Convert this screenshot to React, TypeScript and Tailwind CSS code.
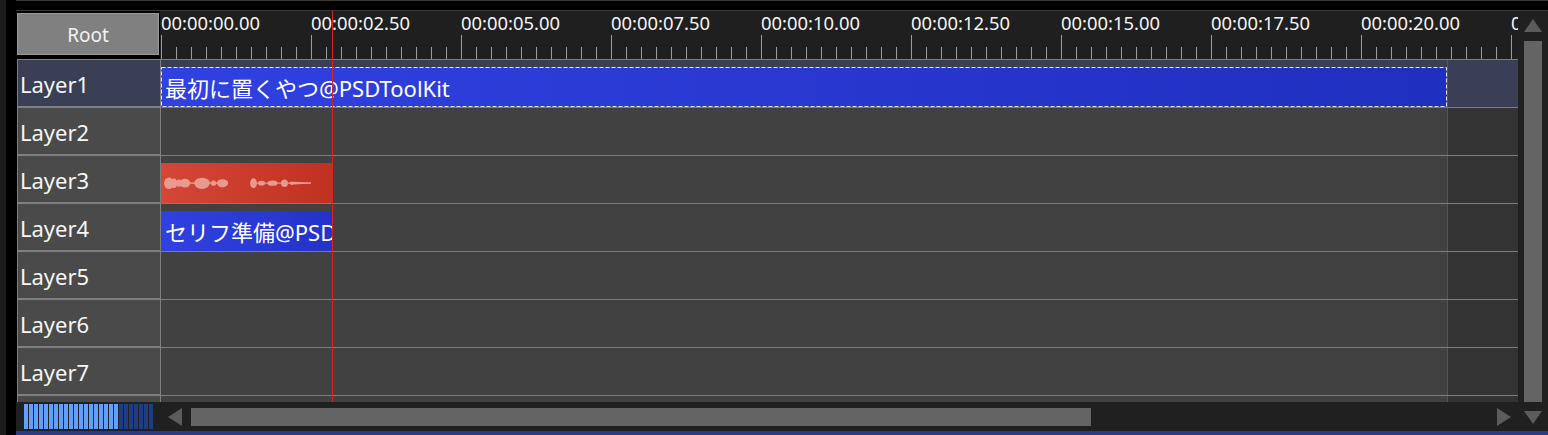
import React from "react";

const labels = [
  "00:00:00.00",
  "00:00:02.50",
  "00:00:05.00",
  "00:00:07.50",
  "00:00:10.00",
  "00:00:12.50",
  "00:00:15.00",
  "00:00:17.50",
  "00:00:20.00",
  "00:00:22.50",
];

type Clip =
  | { kind: "blue"; w: number; text: string; dashed?: boolean }
  | { kind: "audio"; w: number };

const rows: { name: string; selected?: boolean; clip?: Clip }[] = [
  { name: "Layer1", selected: true, clip: { kind: "blue", w: 1286, text: "最初に置くやつ@PSDToolKit", dashed: true } },
  { name: "Layer2" },
  { name: "Layer3", clip: { kind: "audio", w: 171 } },
  { name: "Layer4", clip: { kind: "blue", w: 171, text: "セリフ準備@PSD" } },
  { name: "Layer5" },
  { name: "Layer6" },
  { name: "Layer7" },
  { name: "Layer8" },
];

function Ruler() {
  const ticks = [];
  for (let i = 0; i * 15 + 1 < 1358; i++) {
    const x = 1.5 + i * 15;
    const major = i % 10 === 0;
    ticks.push(<line key={i} x1={x} x2={x} y1={major ? 24 : 36} y2={48} stroke="#9c9c9c" strokeWidth={1} />);
  }
  return (
    <div className="relative w-[1358px] h-[48px] bg-[#1f1f1f] overflow-hidden">
      <svg className="absolute inset-0" width={1358} height={48}>
        {ticks}
      </svg>
      <div className="relative flex pt-[3px] pl-px text-[18.4px] leading-[18px] text-[#f4f4f4] whitespace-nowrap">
        {labels.map((l) => (
          <span key={l} className="w-[150px] shrink-0">
            {l}
          </span>
        ))}
      </div>
    </div>
  );
}

function Waveform() {
  const f = "#e89a90";
  return (
    <svg className="absolute inset-0" width={171} height={40}>
      <rect x={4} y={19.4} width={60} height={1.4} fill={f} />
      <rect x={90} y={19.5} width={60} height={1.2} fill={f} />
      <ellipse cx={8} cy={20.3} rx={5} ry={5.8} fill={f} />
      <ellipse cx={13} cy={20.3} rx={3.4} ry={4.8} fill={f} />
      <ellipse cx={18} cy={20.2} rx={3} ry={3.6} fill={f} />
      <ellipse cx={24} cy={20.2} rx={5.2} ry={4.4} fill={f} />
      <ellipse cx={41} cy={20.3} rx={7.8} ry={5.6} fill={f} />
      <ellipse cx={52.5} cy={20.2} rx={2.6} ry={2.6} fill={f} />
      <ellipse cx={61.5} cy={20.2} rx={5.6} ry={4} fill={f} />
      <ellipse cx={92.5} cy={20.2} rx={3.4} ry={5} fill={f} />
      <ellipse cx={100.5} cy={20.2} rx={3.5} ry={2.4} fill={f} />
      <ellipse cx={111.5} cy={20.2} rx={5} ry={2.6} fill={f} />
      <ellipse cx={123.5} cy={20.2} rx={3.4} ry={3.7} fill={f} />
      <ellipse cx={131} cy={20.2} rx={2.2} ry={1.7} fill={f} />
      <polygon points="133,18.8 150,19.8 150,20.6 133,21.6" fill={f} />
    </svg>
  );
}

function ClipView({ clip }: { clip: Clip }) {
  if (clip.kind === "audio") {
    return (
      <div
        className="relative mt-[7px] h-[40px] bg-linear-to-r from-[#d44636] to-[#bf3222] shrink-0"
        style={{ width: clip.w }}
      >
        <Waveform />
      </div>
    );
  }
  return (
    <div
      className={`relative mt-[7px] h-[40px] shrink-0 overflow-hidden whitespace-nowrap text-[22px] leading-[42px] text-white ${
        clip.dashed ? "pl-[4px] bg-linear-to-r from-[#3141e1] to-[#1f2fbf]" : "pl-[4px] bg-linear-to-r from-[#3141e1] to-[#2333c8]"
      }`}
      style={{ width: clip.w }}
    >
      {clip.dashed && (
        <svg className="absolute inset-0" width={clip.w} height={40}>
          <rect
            x={0.5}
            y={0.5}
            width={clip.w - 1}
            height={39}
            fill="none"
            stroke="#e6e6e6"
            strokeWidth={1}
            strokeDasharray="4 2"
          />
        </svg>
      )}
      <span className="relative">{clip.text}</span>
    </div>
  );
}

function Row({ name, selected, clip }: { name: string; selected?: boolean; clip?: Clip }) {
  return (
    <div className="flex h-[48px] shrink-0">
      <div className="w-[145px] pl-px shrink-0">
        <div
          className={`w-[144px] h-[48px] border border-[#7f7f7f] flex items-center pt-[3px] pl-[2px] text-[22px] text-[#f6f6f6] ${
            selected ? "bg-[#3b3f56]" : "bg-[#4a4a4a]"
          }`}
        >
          {name}
        </div>
      </div>
      <div className="flex-1 flex border-t border-[#7d7d7d]">
        <div className={`w-[1286px] shrink-0 flex ${selected ? "bg-[#3a3f56]" : "bg-[#414141]"}`}>
          {clip && <ClipView clip={clip} />}
        </div>
        <div className={`flex-1 border-l border-[#555555] ${selected ? "bg-[#3a3f56]" : "bg-[#333333]"}`} />
      </div>
    </div>
  );
}

function Meter() {
  const bars = [];
  for (let i = 0; i < 26; i++) {
    bars.push(
      <div key={i} className={`w-[4px] h-[25px] ${i < 19 ? "bg-[#62a0ff]" : "bg-[#1f3d84]"}`} />
    );
  }
  return <div className="flex gap-px ml-[8px]">{bars}</div>;
}

export default function App() {
  return (
    <div className="relative w-[1548px] h-[435px] bg-black flex overflow-hidden font-['Noto_Sans','Noto_Sans_CJK_JP',sans-serif]">
      <div className="w-[6px] h-full bg-[#1c1c1c] shrink-0" />
      <div className="w-[10px] h-full bg-black shrink-0" />
      <div className="flex-1 flex flex-col">
        <div className="h-px bg-[#3a3a3a]" />
        <div className="h-[9px]" />
        <div className="h-px bg-[#3a3a3a]" />
        <div className="flex h-[420px]">
          <div className="w-[1502px] flex flex-col">
            <div className="flex h-[48px]">
              <div className="w-[144px] bg-black">
                <div className="ml-px mt-[2px] w-[142px] h-[42px] border border-[#9a9a9a] bg-[#808080] flex items-center justify-center pt-[3px] text-[19px] text-[#f2f2f2]">
                  Root
                </div>
              </div>
              <Ruler />
            </div>
            <div className="h-[343px] flex flex-col overflow-hidden">
              {rows.map((r) => (
                <Row key={r.name} {...r} />
              ))}
            </div>
            <div className="h-[29px] bg-[#202020] flex items-center">
              <Meter />
              <svg className="ml-[15px]" width={14} height={18}>
                <polygon points="14,0 14,18 0,9" fill="#5c5c5c" />
              </svg>
              <div className="ml-[9px] w-[900px] h-[18px] bg-[#646464]" />
              <svg className="ml-auto mr-[7px]" width={14} height={18}>
                <polygon points="0,0 0,18 14,9" fill="#5c5c5c" />
              </svg>
            </div>
          </div>
          <div className="w-[30px] bg-[#202020] flex flex-col items-center pt-[8px]">
            <svg width={18} height={13}>
              <polygon points="9,0 18,13 0,13" fill="#5c5c5c" />
            </svg>
            <div className="mt-[9px] w-[18px] h-[361px] bg-[#646464]" />
            <svg className="mt-[9px]" width={18} height={13}>
              <polygon points="0,0 18,0 9,13" fill="#5c5c5c" />
            </svg>
          </div>
        </div>
        <div className="h-[4px] bg-[#2d3b82]" />
      </div>
      <div className="absolute left-[332px] top-[11px] w-px h-[391px] bg-[#d42424]" />
    </div>
  );
}
